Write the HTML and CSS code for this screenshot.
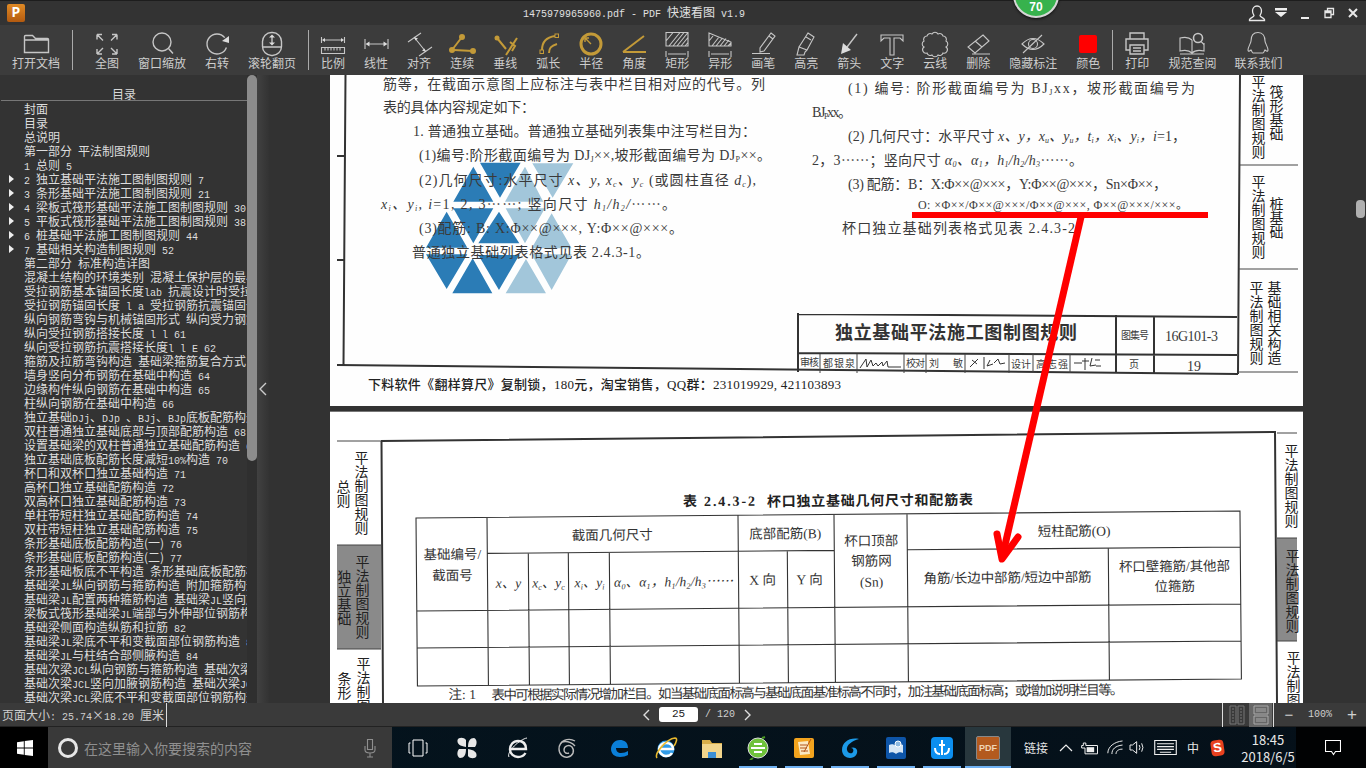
FILE: index.html
```html
<!DOCTYPE html>
<html lang="zh-CN">
<head>
<meta charset="utf-8">
<title>PDF 快速看图</title>
<link rel="stylesheet" href="styles.css">
</head>
<body>
<div class="app">
  <header class="titlebar">
    <div class="logo">P</div>
    <div class="title"><span class="m">1475979965960.pdf - PDF </span>快速看图<span class="m"> v1.9</span></div>
    <div class="winctl">
      <svg class="wc" viewBox="0 0 20 20"><path d="M10 3c-3 0-4.500 2.500-4.500 5 0 2 1 3.500 1.500 4.500 0 1.500-3.500 2-4.500 4v1h15v-1c-1-2-4.500-2.500-4.500-4 .5-1 1.500-2.500 1.500-4.500 0-2.500-1.500-5-4.500-5z"/></svg>
      <svg class="wc wc-fill" viewBox="0 0 20 20"><path d="M4 5h12v2.500H4zM4 9h12l-6 5z"/></svg>
      <svg class="wc wc-fill" viewBox="0 0 20 20"><path d="M6 14h8v2H6z"/></svg>
      <svg class="wc" viewBox="0 0 20 20"><path d="M8.500 8V5.500h6v6H12M6 8h6v6.500H6zM6 9.500h6"/></svg>
      <svg class="wc wc-bold" viewBox="0 0 20 20"><path d="M6 6l8 8M14 6l-8 8"/></svg>
    </div>
  </header>

  <nav class="toolbar">
    <button class="tool tool-first"><svg class="ico" viewBox="-8 0 40 28"><path d="M.5 24.500V8.500q0-1 1-1h7l3 3h12q1 0 1 1v13zM.5 12h24"/></svg><span>打开文档</span></button>
    <i class="sep"></i>
    <button class="tool tool-view1"><svg class="ico" viewBox="-8 0 40 28"><path d="M2 6.500h5M2 6.500v5M2 6.500l6 6M22 6.500h-5M22 6.500v5M22 6.500l-6 6M2 26h5M2 26v-5M2 26l6-6M22 26h-5M22 26v-5M22 26l-6-6"/></svg><span>全图</span></button>
    <button class="tool"><svg class="ico" viewBox="-8 0 40 28"><circle cx="12" cy="14" r="9"/><path d="M18.500 20.500L23 25.500"/></svg><span>窗口缩放</span></button>
    <button class="tool"><svg class="ico" viewBox="-8 0 40 28"><path d="M19.700 9.600A10 10 0 1 0 21.400 19.400"/><path class="solid" d="M24 8v7l-7-2z"/></svg><span>右转</span></button>
    <button class="tool"><svg class="ico" viewBox="-8 0 40 28"><rect x="2.500" y="4.500" width="19" height="23" rx="9"/><path d="M2.500 19h19M12 9v6"/><path class="solid" d="M12 6.500l3 3H9zM12 17.500l3-3H9z"/></svg><span>滚轮翻页</span></button>
    <i class="sep sep-b"></i>
    <button class="tool tool-m"><svg class="ico thin" viewBox="-8 0 40 28"><path d="M.5 9v6M23.500 9v6M3 12h18"/><path class="solid" d="M1 12l3-2v4zM23 12l-3-2v4z"/><path d="M.5 19.500h23v6H.5zM4 19.500v3M7 19.500v3M10 19.500v3M13 19.500v3M16 19.500v3M19 19.500v3"/></svg><span>比例</span></button>
    <button class="tool tool-m"><svg class="ico thin" viewBox="-8 0 40 28"><path d="M1 11v10M24 11v10M3 16h19"/><path class="solid" d="M1.500 16l4-2.500v5zM23.500 16l-4-2.500v5z"/></svg><span>线性</span></button>
    <button class="tool tool-m"><svg class="ico thin" viewBox="-8 0 40 28"><path d="M1 14L14 5M12 28l13-9M7 9l12 15"/><path class="solid" d="M7 9l4 1.500-2.500 2zM19 24l-4-1.500 2.500-2z"/></svg><span>对齐</span></button>
    <button class="tool tool-m"><svg class="ico au" viewBox="-8 0 40 28"><path d="M12 9L2 22M4 22l19 1"/><circle class="dot" cx="12" cy="9" r="3"/><circle class="dot" cx="2" cy="22" r="3"/><circle class="dot" cx="23" cy="23" r="3"/></svg><span>连续</span></button>
    <button class="tool tool-m"><svg class="ico au" viewBox="-8 0 40 28"><path d="M4 10l9 11M24 10L13 27M17 14l5 4-3 5"/><circle class="dot" cx="4" cy="10" r="2.500"/></svg><span>垂线</span></button>
    <button class="tool tool-m"><svg class="ico au" viewBox="-8 0 40 28"><path d="M6 22C6 13 12 9 19 8M13 25c0-5 2-7 8-9"/><rect class="box" x="4" y="22" width="3.500" height="3.500"/><rect class="box" x="19" y="6" width="3.500" height="3.500"/></svg><span>弧长</span></button>
    <button class="tool tool-m"><svg class="ico au heavy" viewBox="-8 0 40 28"><circle cx="12" cy="16" r="10"/><path class="fine" d="M12 16L6 10M6 10v4M6 10h4"/></svg><span>半径</span></button>
    <button class="tool tool-m"><svg class="ico au" viewBox="-8 0 40 28"><path d="M1 24h23M1 24L22 8"/></svg><span>角度</span></button>
    <button class="tool tool-m"><svg class="ico thin" viewBox="-8 0 40 28"><path d="M1 4.500h22v13.500H1zM4 18L15 4.500M8 18L19 4.500M12 18L23 4.500M16 18l7-8.500M1 13L8 4.500M20 18l3-3.500M1 23v6M23 23v6M3 26h18"/></svg><span>矩形</span></button>
    <button class="tool tool-m"><svg class="ico thin" viewBox="-8 0 40 28"><path d="M1 5l22 9v4H1zM4 18L11 9M8 18l6.500-8M12 18l6-7.500M16 18l5-6M1 13l4-5M20 18l3-3M1 23v6M23 23v6M3 26h18"/></svg><span>异形</span></button>
    <button class="tool tool-m"><svg class="ico thin" viewBox="-8 0 40 28"><path d="M20 5l4 3-11 15-4 1v-4zM18 8l4 3M1 25.500h18"/></svg><span>画笔</span></button>
    <button class="tool tool-m"><svg class="ico thin" viewBox="-8 0 40 28"><path d="M14 5l6 4-7 13-8-3zM5 19l-1 4-1 4h7l1-3 2-2M12 9l5 3"/></svg><span>高亮</span></button>
    <button class="tool tool-m"><svg class="ico" viewBox="-8 0 40 28"><path d="M20 6L7 23"/><path class="solid" d="M4 26l2-11 8 7z"/></svg><span>箭头</span></button>
    <button class="tool tool-m"><svg class="ico thin" viewBox="-8 0 40 28"><path d="M1 7h22v6l-3-3h-6v17h-4V10H4l-3 3z"/></svg><span>文字</span></button>
    <button class="tool tool-m"><svg class="ico thin" viewBox="-8 0 40 28"><path d="M4 8A3.400 3.400 0 0 1 9 6 3.400 3.400 0 0 1 15 6 3.400 3.400 0 0 1 20 8 3.400 3.400 0 0 1 23 13 3.400 3.400 0 0 1 23 19 3.400 3.400 0 0 1 20 25 3.400 3.400 0 0 1 15 27 3.400 3.400 0 0 1 9 27 3.400 3.400 0 0 1 4 25 3.400 3.400 0 0 1 1 19 3.400 3.400 0 0 1 1 13 3.400 3.400 0 0 1 4 8z"/></svg><span>云线</span></button>
    <button class="tool tool-m"><svg class="ico thin" viewBox="-8 0 40 28"><path d="M17 7l6 6-14 12-7-6zM9 13l7 6M6 26h18"/></svg><span>删除</span></button>
    <button class="tool tool-m"><svg class="ico thin" viewBox="-8 0 40 28"><path d="M1 16Q12 5 23 16 12 27 1 16z"/><circle cx="12" cy="16" r="4.500"/><path d="M21 7L2 25"/></svg><span>隐藏标注</span></button>
    <button class="tool tool-m"><svg class="ico" viewBox="-8 0 40 28"><rect class="red" x="3" y="7" width="18" height="18" rx="2"/></svg><span>颜色</span></button>
    <i class="sep sep-b"></i>
    <button class="tool tool-m"><svg class="ico" viewBox="-8 0 40 28"><path d="M5 11V5h14v6M5 22H1V11h22v11h-4M5 17h14v9H5zM8 20h8M8 23h8"/></svg><span>打印</span></button>
    <button class="tool tool-m"><svg class="ico thin" viewBox="-8 0 40 28"><path d="M12 12C9 9 4 9 0 10v13c4-1 9-1 12 2 3-3 8-3 12-2V15M12 12v13M0 26h24"/><circle class="lens" cx="18" cy="10" r="4.500"/><path d="M21 13.500l3 3"/></svg><span>规范查阅</span></button>
    <button class="tool tool-q"><svg class="ico thin" viewBox="-8 0 40 28"><path d="M12 4.500c-5 0-7 4-7 8.500 0 2-3 6-3 9 0 2 2 1 3 0 1 1 1 3 2 3h10c1 0 1-2 2-3 1 1 3 2 3 0 0-3-3-7-3-9 0-4.500-2-8.500-7-8.500z"/></svg><span>联系我们</span></button>
  </nav>
  <div class="badge"><span>70</span></div>

  <main class="main">
    <aside class="side">
      <div class="side-head">目录</div>
      <ul class="toc">
        <li>封面</li>
        <li>目录</li>
        <li>总说明</li>
        <li>第一部分 平法制图规则</li>
        <li><span class="m">1</span> 总则 <span class="m">5</span></li>
        <li class="more"><span class="m">2</span> 独立基础平法施工图制图规则 <span class="m">7</span></li>
        <li class="more"><span class="m">3</span> 条形基础平法施工图制图规则 <span class="m">21</span></li>
        <li class="more"><span class="m">4</span> 梁板式筏形基础平法施工图制图规则 <span class="m">30</span></li>
        <li class="more"><span class="m">5</span> 平板式筏形基础平法施工图制图规则 <span class="m">38</span></li>
        <li class="more"><span class="m">6</span> 桩基础平法施工图制图规则 <span class="m">44</span></li>
        <li class="more"><span class="m">7</span> 基础相关构造制图规则 <span class="m">52</span></li>
        <li>第二部分 标准构造详图</li>
        <li>混凝土结构的环境类别 混凝土保护层的最小厚度</li>
        <li>受拉钢筋基本锚固长度<span class="m">lab</span> 抗震设计时受拉钢筋</li>
        <li>受拉钢筋锚固长度<span class="m"> l a</span> 受拉钢筋抗震锚固长度</li>
        <li>纵向钢筋弯钩与机械锚固形式 纵向受力钢筋</li>
        <li>纵向受拉钢筋搭接长度<span class="m"> l l</span>  <span class="m">61</span></li>
        <li>纵向受拉钢筋抗震搭接长度<span class="m">l l E</span> <span class="m">62</span></li>
        <li>箍筋及拉筋弯钩构造 基础梁箍筋复合方式 <span class="m">63</span></li>
        <li>墙身竖向分布钢筋在基础中构造 <span class="m">64</span></li>
        <li>边缘构件纵向钢筋在基础中构造 <span class="m">65</span></li>
        <li>柱纵向钢筋在基础中构造 <span class="m">66</span></li>
        <li>独立基础<span class="m">DJj</span>、<span class="m">DJp</span> 、<span class="m">BJj</span>、<span class="m">BJp</span>底板配筋构造</li>
        <li>双柱普通独立基础底部与顶部配筋构造 <span class="m">68</span></li>
        <li>设置基础梁的双柱普通独立基础配筋构造 <span class="m">69</span></li>
        <li>独立基础底板配筋长度减短<span class="m">10%</span>构造 <span class="m">70</span></li>
        <li>杯口和双杯口独立基础构造 <span class="m">71</span></li>
        <li>高杯口独立基础配筋构造 <span class="m">72</span></li>
        <li>双高杯口独立基础配筋构造 <span class="m">73</span></li>
        <li>单柱带短柱独立基础配筋构造 <span class="m">74</span></li>
        <li>双柱带短柱独立基础配筋构造 <span class="m">75</span></li>
        <li>条形基础底板配筋构造(一) <span class="m">76</span></li>
        <li>条形基础底板配筋构造(二) <span class="m">77</span></li>
        <li>条形基础板底不平构造 条形基础底板配筋构造</li>
        <li>基础梁<span class="m">JL</span>纵向钢筋与箍筋构造 附加箍筋构造</li>
        <li>基础梁<span class="m">JL</span>配置两种箍筋构造 基础梁<span class="m">JL</span>竖向加腋</li>
        <li>梁板式筏形基础梁<span class="m">JL</span>端部与外伸部位钢筋构造</li>
        <li>基础梁侧面构造纵筋和拉筋 <span class="m">82</span></li>
        <li>基础梁<span class="m">JL</span>梁底不平和变截面部位钢筋构造 <span class="m">83</span></li>
        <li>基础梁<span class="m">JL</span>与柱结合部侧腋构造 <span class="m">84</span></li>
        <li>基础次梁<span class="m">JCL</span>纵向钢筋与箍筋构造 基础次梁</li>
        <li>基础次梁<span class="m">JCL</span>竖向加腋钢筋构造 基础次梁<span class="m">JCL</span></li>
        <li>基础次梁<span class="m">JCL</span>梁底不平和变截面部位钢筋构造</li>
      </ul>
    </aside>
    <div class="side-bar"><i class="side-thumb"></i></div>
    <div class="collapse"><svg class="chev" viewBox="0 0 8 14"><path d="M7 1L1 7l6 6"/></svg></div>

    <section class="viewer">
      <div class="page page-one">
        <svg class="scan" viewBox="330 75 973 331">
          <g transform="translate(330 75) scale(.3333)">
            <path class="tri-d" d="M450 263h122l-62 105zM370 380h120l-60-105zM370 400h120l-60 105zM445 505h123l-61-95zM288 518h124l-62-108zM288 538h124l-62 104zM367 655h120l-59-105zM445 540h123l-61 105z"/>
            <path class="tri-l" d="M525 380h115l-55-105zM607 265h123l-62 103zM527 400h118l-60 105zM605 520h120l-60-105zM605 538h120l-60 107zM527 655h121l-60-103z"/>
          </g>
          <path class="fr" d="M345.500 75L343.500 366M337 365l901 9M1240 75l-2 299M337 156h8M337 260h7"/>
          <text class="d" x="383" y="84" textLength="382">筋等，在截面示意图上应标注与表中栏目相对应的代号。列</text>
          <text class="d" x="383" y="107" textLength="152">表的具体内容规定如下：</text>
          <text class="d" x="413" y="131" textLength="343">1. 普通独立基础。普通独立基础列表集中注写栏目为：</text>
          <text class="d" x="419" y="155" textLength="352">(1)编号:阶形截面编号为 DJ<tspan class="s">J</tspan>××,坡形截面编号为 DJ<tspan class="s">P</tspan>××。</text>
          <text class="d" x="419" y="180" textLength="337">(2)几何尺寸:水平尺寸 <tspan class="i">x、y, x<tspan class="s">c</tspan>、y<tspan class="s">c</tspan></tspan> (或圆柱直径 <tspan class="i">d<tspan class="s">c</tspan></tspan>),</text>
          <text class="d" x="381" y="204" textLength="295"><tspan class="i">x<tspan class="s">i</tspan>、y<tspan class="s">i</tspan>, i</tspan>=1, 2, 3⋯⋯; 竖向尺寸 <tspan class="i">h<tspan class="s">1</tspan>/h<tspan class="s">2</tspan>/</tspan>⋯⋯。</text>
          <text class="d" x="419" y="228" textLength="264">(3)配筋: B: X:Φ××@×××, Y:Φ××@×××。</text>
          <text class="d" x="412" y="252" textLength="238">普通独立基础列表格式见表 2.4.3-1。</text>

          <text class="d" x="848" y="88" textLength="347">(1) 编号:  阶形截面编号为 BJ<tspan class="s">J</tspan>xx，坡形截面编号为</text>
          <text class="d" x="812" y="112" textLength="40">BJ<tspan class="s">P</tspan>xx。</text>
          <text class="d" x="848" y="136" textLength="338">(2) 几何尺寸：水平尺寸 <tspan class="i">x、y，x<tspan class="s">u</tspan>、y<tspan class="s">u</tspan>，t<tspan class="s">i</tspan>，x<tspan class="s">i</tspan>、y<tspan class="s">i</tspan>，i</tspan>=1，</text>
          <text class="d" x="812" y="160" textLength="271">2，3⋯⋯；竖向尺寸 <tspan class="i">α<tspan class="s">0</tspan>、α<tspan class="s">1</tspan>，h<tspan class="s">1</tspan>/h<tspan class="s">2</tspan>/h<tspan class="s">3</tspan></tspan>⋯⋯。</text>
          <text class="d" x="848" y="184" textLength="319">(3) 配筋：B：X:Φ××@×××，Y:Φ××@×××，Sn×Φ××，</text>
          <text class="d d-sm" x="918" y="205" textLength="270">O: ×Φ××/Φ××@×××/Φ××@×××, Φ××@×××/×××。</text>
          <text class="d" x="842" y="228" textLength="233">杯口独立基础列表格式见表 2.4.3-2</text>
          <text class="d d-foot" x="368" y="384" textLength="473">下料软件《翻样算尺》复制锁，180元，淘宝销售，QQ群：231019929, 421103893</text>

          <path class="fr" d="M798 314l439 3M798 313v59M798 353l439 2M1116 315v57M1154 316v57"/>
          <path class="hair" d="M820 354v19M857 354v19M904 354v19M926 354v19M965 354v19M1009 354v19M1033 354v19M1070 354v19"/>
          <path class="hair" d="M1240 165h58M1239 269h59M1238 372h60"/>
          <text class="d d-title" x="835" y="333" textLength="242">独立基础平法施工图制图规则</text>
          <text class="d d-xs" x="1121" y="335" textLength="28">图集号</text>
          <text class="d" x="1165" y="336" textLength="53">16G101-3</text>
          <text class="d d-xs" x="800" y="362" textLength="19">审核</text>
          <text class="d d-xs" x="823" y="363" textLength="32">都银泉</text>
          <path class="sig" d="M860 368l6-9 1 8 4-7 2 6 3-3 2 3 4-4 1 4 4-5 1 6h13"/>
          <text class="d d-xs" x="906" y="363" textLength="19">校对</text>
          <text class="d d-xs" x="929" y="363" textLength="34">刘  敏</text>
          <path class="sig" d="M970 367l8-8M972 360l5 4M984 357v12M990 360l-3 6 6-2M994 363l4-4 2 5 5-1"/>
          <text class="d d-xs" x="1011" y="364" textLength="20">设计</text>
          <text class="d d-xs" x="1036" y="364" textLength="32">高志强</text>
          <path class="sig" d="M1074 363h8M1085 358v12M1082 361h7M1092 358l-2 8 6-1M1095 360h5M1096 366h5"/>
          <text class="d d-xs" x="1129" y="364">页</text>
          <text class="d" x="1187" y="366">19</text>

          <text class="d v" x="1257" y="75">平法制图规则</text>
          <text class="d v" x="1275" y="85">筏形基础</text>
          <text class="d v" x="1257" y="175">平法制图规则</text>
          <text class="d v" x="1275" y="197">桩基础</text>
          <text class="d v" x="1255" y="281">平法制图规则</text>
          <text class="d v" x="1273" y="281">基础相关构造</text>
        </svg>
      </div>

      <div class="page page-two">
        <svg class="scan" viewBox="330 411 973 292">
          <rect class="tab" x="337" y="545" width="44" height="104"/>
          <rect class="tab" x="1277" y="538" width="20" height="103"/>
          <path class="fr" d="M381 441l895-9M381.500 441L383 703M1275 432l2 271"/>
          <path class="hair" d="M337 441h44M337 545h44M337 649h44M1277 433h20M1277 538h20M1277 641h20"/>
          <text class="d v" x="342" y="480">总则</text>
          <text class="d v" x="360" y="451">平法制图规则</text>
          <text class="d v" x="343" y="570">独立基础</text>
          <text class="d v" x="361" y="555">平法制图规则</text>
          <text class="d v" x="343" y="672">条形</text>
          <text class="d v" x="362" y="657">平法制图规则</text>
          <text class="d v" x="1290" y="444">平法制图规则</text>
          <text class="d v" x="1291" y="549">平法制图规则</text>
          <text class="d v" x="1292" y="651">平法制图规则</text>
          <g transform="rotate(-.49 416 518)">
            <path class="tb" d="M416 518h824v168H416zM487 518v168M738 518v168M834 518v168M907 518v168M487 554h347M907 554h333M416 611h824M416 648h824M528 554v132M568 554v132M609 554v132M787 554v132M1108 554v132"/>
            <text class="d t-b" x="683" y="504" textLength="72">表 2.4.3-2</text>
            <text class="d t-b" x="767" y="505" textLength="206">杯口独立基础几何尺寸和配筋表</text>
            <text class="d t mid" x="452" y="555">基础编号/</text>
            <text class="d t mid" x="452" y="576">截面号</text>
            <text class="d t mid" x="612" y="537">截面几何尺寸</text>
            <text class="d t i mid" x="508" y="584">x、y</text>
            <text class="d t i mid" x="548" y="584">x<tspan class="s">c</tspan>、y<tspan class="s">c</tspan></text>
            <text class="d t i mid" x="589" y="584">x<tspan class="s">i</tspan>、y<tspan class="s">i</tspan></text>
            <text class="d t i mid" x="673" y="584" textLength="119">α<tspan class="s">0</tspan>、α<tspan class="s">1</tspan>，h<tspan class="s">1</tspan>/h<tspan class="s">2</tspan>/h<tspan class="s">3</tspan>⋯⋯</text>
            <text class="d t mid" x="785" y="537">底部配筋(B)</text>
            <text class="d t mid" x="762" y="583">X 向</text>
            <text class="d t mid" x="809" y="583">Y 向</text>
            <text class="d t mid" x="871" y="545">杯口顶部</text>
            <text class="d t mid" x="871" y="565">钢筋网</text>
            <text class="d t mid" x="871" y="586">(Sn)</text>
            <text class="d t mid" x="1074" y="537">短柱配筋(O)</text>
            <text class="d t mid" x="1007" y="583" textLength="168">角筋/长边中部筋/短边中部筋</text>
            <text class="d t mid" x="1174" y="573" textLength="111">杯口壁箍筋/其他部</text>
            <text class="d t mid" x="1174" y="593">位箍筋</text>
            <text class="d t" x="447" y="695">注: 1</text>
            <text class="d t" x="490" y="696" textLength="632">表中可根据实际情况增加栏目。如当基础底面标高与基础底面基准标高不同时，加注基础底面标高；或增加说明栏目等。</text>
          </g>
        </svg>
      </div>

      <svg class="mark" viewBox="269 75 1097 628">
        <path class="mark-bar" d="M912 215h296"/>
        <path class="mark-line" d="M1081 217L1002 558"/>
        <path class="mark-head" d="M997 534L1002 559 1018 537"/>
      </svg>
      <i class="vthumb"></i>
    </section>
  </main>

  <footer class="status">
    <div class="st-left">页面大小<span class="m">: 25.74</span><span class="times">×</span><span class="m">18.20</span> 厘米</div>
    <div class="nav">
      <svg class="navchev" viewBox="0 0 8 12"><path d="M6 1L1 6l5 5"/></svg>
      <span class="pageno">25</span>
      <span class="m pagect">/ 120</span>
      <svg class="navchev navchev-r" viewBox="0 0 8 12"><path d="M2 1l5 5-5 5"/></svg>
    </div>
    <div class="views">
      <svg class="vicon" viewBox="0 0 16 20"><path d="M1 1h6v18H1zM9 1h6v18H9zM3 4h2M3 7h2M3 10h2M3 13h2M3 16h2M11 4h2M11 7h2M11 10h2M11 13h2M11 16h2"/></svg>
      <span class="vactive"><svg class="vicon2" viewBox="0 0 16 20"><path d="M1 1h14v8H1zM1 11h14v8H1zM3 4h10M3 6h10M3 14h10M3 16h10"/></svg></span>
    </div>
    <div class="zoombox">
      <span class="zbtn">−</span>
      <span class="m zval">100%</span>
      <span class="zbtn zbtn-p">+</span>
    </div>
  </footer>

  <div class="taskbar">
    <div class="start"><svg class="win" viewBox="0 0 16 16"><path d="M0 2.200l6.800-1v6.400H0zM7.700 1.100L16 0v7.600H7.700zM0 8.500h6.800v6.300L0 13.800zM7.700 8.500H16V16l-8.300-1.100z"/></svg></div>
    <div class="search">
      <i class="cortana"></i>
      <span class="ph">在这里输入你要搜索的内容</span>
      <svg class="mic" viewBox="0 0 12 20"><path d="M3.500 1.500h5v10h-5zM1 8v4q0 3 5 3t5-3V8M6 15v4M3 19h6"/></svg>
    </div>
    <div class="slot s-task"><svg class="tv" viewBox="0 0 20 18"><path d="M5 1h10v16H5zM2.500 4H1v10h1.500M17.500 4H19v10h-1.500"/></svg></div>
    <div class="slot s-pin"><svg class="ti" viewBox="0 0 24 24"><path class="w" d="M11 11C5 10 2 8 2.500 4 3.500 1 9 1 11 4zM13 11c0-6 2-9 6-9 3 1 3.500 6 1 9zM13 13c6 1 9 3 8.500 7-1 3-6.500 3-8.500 0zM11 13c0 6-2 9-6 9-3-1-3.500-6-1-9z"/></svg></div>
    <div class="slot s-ie"><svg class="ti" viewBox="0 0 24 24"><path class="ws" d="M5 13h15C20 7 16 5 12 5 7 5 4 9 4 13.500S8 21 12 21c3 0 6-1.500 7.500-4"/><path class="ws2" d="M3 21C0 16 14 3 21 2"/></svg></div>
    <div class="slot s-swirl"><svg class="ti" viewBox="0 0 24 24"><path class="gs" d="M20 5C13 1 4 5 4 13c0 6 5 9 9 8 5-1 7-6 4-10-3-3-8-1-8 3 0 3 3 4 5 3M7 6c4-1 9 0 13 4"/></svg></div>
    <div class="slot s-edge"><svg class="ti" viewBox="0 0 24 24"><path class="edge" d="M5 12h15C20 6 16 4 12 4 6 4 3 9 3 13c0 5 4 8 9 8 3 0 6-1 8-2v-4c-2 1-4 2-7 2-3 0-5-2-5-5z"/></svg></div>
    <div class="slot"><svg class="ti" viewBox="0 0 24 24"><circle class="ie-r" cx="12" cy="13" r="8.500"/><path class="ie-e" d="M6 13h13c0-4-3-6-7-6s-7 3-7 6 3 7 7 7c3 0 5-1 6-3"/><path class="ie-o" d="M3 22C0 18 12 3 21 2c3 0 1 5-1 8"/></svg></div>
    <div class="slot"><svg class="ti" viewBox="0 0 24 24"><path class="fo-b" d="M2 4h8l2 3h10v15H2z"/><path class="fo-f" d="M2 8h20v14H2z"/><path class="fo-i" d="M8 22v-6h8v6z"/></svg></div>
    <div class="slot on"><svg class="ti" viewBox="0 0 24 24"><circle class="gr" cx="12" cy="12" r="10"/><path class="grw" d="M5 12h14M8 8h8M8 16h8"/><path class="grl" d="M16 2l3-1M7 22l-3 2"/></svg></div>
    <div class="slot on"><svg class="ti" viewBox="0 0 24 24"><rect class="nb" x="2" y="2" width="20" height="20" rx="2"/><path class="nbp" d="M6 6l10-1 2 13-10 1z"/><path class="nbl" d="M8 9h7M8 12h7M9 15h7M19 3l-7 13"/></svg></div>
    <div class="slot on"><svg class="ti" viewBox="0 0 24 24"><path class="gb" d="M21 3C12 1 4 6 4 14c0 5 4 8 8 8 5 0 8-4 7-8-1-3-5-3-6-2 2 0 3 2 2 4s-5 2-6-2C8 9 14 5 21 3z"/></svg></div>
    <div class="slot on"><svg class="ti" viewBox="0 0 24 24"><rect class="bk" x="2" y="1" width="20" height="22" rx="2"/><path class="bkw" d="M5 17c2-1 5-1 7 1 2-2 5-2 7-1V9c-2-1-5-1-7 1-2-2-5-2-7-1z"/><circle class="bkc" cx="14" cy="8" r="3"/></svg></div>
    <div class="slot on"><svg class="ti" viewBox="0 0 24 24"><rect class="ba" x="1" y="1" width="22" height="22" rx="4"/><path class="baw" d="M12 4v15M5 12c0 5 3 6 5 6M19 12c0 5-3 6-5 6M9 9h6"/></svg></div>
    <div class="slot on active"><span class="pdf"><span>PDF</span></span></div>
    <div class="tray">
      <span class="t-link">链接</span>
      <svg class="tr tr-up" viewBox="0 0 14 14"><path d="M1 10l6-6 6 6"/></svg>
      <svg class="tr tr-bat" viewBox="0 0 24 16"><path d="M2 5h2v-3h3v3h14v10H6V8H2z"/><path class="trf" d="M8 7h9v6H8z"/></svg>
      <svg class="tr tr-wifi" viewBox="0 0 22 18"><path d="M1 16c0-8 8-14 18-15M6 17c0-6 4-10 13-11M11 17c0-3 2-6 8-6"/></svg>
      <svg class="tr tr-vol" viewBox="0 0 20 18"><path d="M1 6h3l5-4v14l-5-4H1zM12 6q2 3 0 6M15 4q3 5 0 10"/></svg>
      <svg class="tr tr-kb" viewBox="0 0 24 16"><path d="M.5.5h23v15H.5zM3 4h18M3 7h18M3 10h18M6 13h12"/></svg>
      <span class="t-zh">中</span>
      <span class="sogou"><span>S</span></span>
      <div class="clock"><span>18:45</span><span>2018/6/5</span></div>
    </div>
    <div class="notify"><svg class="nt" viewBox="0 0 16 16"><path d="M.5.5h15v11h-5l-2 3-2-3h-6z"/></svg></div>
  </div>
</div>
</body>
</html>
```

FILE: styles.css
```css
* { box-sizing: border-box; }
html, body { margin: 0; padding: 0; background: #333; }
body { font-family: "Noto Sans CJK SC", sans-serif; font-size: 12px; color: #d8d8d8; }
.app { position: relative; width: 1366px; height: 768px; display: flex; flex-direction: column; overflow: hidden; }
.m { font-family: "Liberation Mono", monospace; font-size: 10px; word-spacing: 0; }

/* title bar */
.titlebar { height: 25px; display: flex; align-items: center; background: #333; border-top: 1px solid #1d1d1d; flex: none; }
.logo { width: 18px; height: 18px; margin-left: 7px; border-radius: 2px; background: linear-gradient(#e08a25, #b35a10); color: #fff; font: bold 14px/18px "Liberation Mono", monospace; text-align: center; }
.title { margin-left: 498px; font-size: 12px; line-height: 14px; color: #e0e0e0; white-space: nowrap; }
.winctl { margin-left: auto; display: flex; align-items: center; width: 122px; padding-left: 3px; gap: 4px; }
.wc { width: 20px; height: 20px; fill: none; stroke: #e8e8e8; stroke-width: 1.3; }
.wc-fill { fill: #eee; stroke: none; }
.wc-bold { stroke-width: 2; }

/* toolbar */
.toolbar { height: 50px; flex: none; display: flex; align-items: flex-start; background: #3c3c3c; padding-top: 3px; }
.tool { display: flex; flex-direction: column; align-items: center; background: none; border: 0; padding: 0; margin-left: 19px; color: #cdcdcd; font: 12px/14px "Noto Sans CJK SC", sans-serif; white-space: nowrap; }
.tool-first { margin-left: 12px; }
.tool-view1 { margin-left: 22px; }
.tool-q { margin-left: 18px; }
.ico { width: 40px; height: 28px; margin: 0 -8px; overflow: visible; fill: none; stroke: #c6c6c6; stroke-width: 1.4; }
.ico.thin { stroke-width: 1.1; }
.ico .solid { fill: #dcdcdc; stroke: none; }
.ico.au { stroke: #c39a38; stroke-width: 2; }
.ico.au.heavy { stroke-width: 3; }
.ico .dot { fill: #c39a38; stroke: none; }
.ico .box { stroke-width: 1; fill: #3c3c3c; }
.ico .fine { stroke-width: 1.4; }
.ico .red { fill: #f00; stroke: none; }
.ico .lens { fill: #3c3c3c; stroke-width: 1.6; }
.sep { flex: none; width: 1px; height: 40px; margin: 2px 0 0 12px; background: #aaa; }
.sep + .tool { margin-left: 22px; }
.sep-b + .tool { margin-left: 12px; }

/* badge */
.badge { position: absolute; left: 1013px; top: -28px; width: 46px; height: 46px; border-radius: 50%; background: #37b24d; border: 2px solid #d6d6d6; box-shadow: 0 1px 3px rgba(0, 0, 0, .7); display: flex; align-items: flex-end; justify-content: center; z-index: 3; }
.badge span { color: #fff; font: bold 12px/15px "Liberation Sans", sans-serif; margin-bottom: 1px; }

/* main */
.main { flex: 1; min-height: 0; display: flex; background: #333; }
.side { width: 247px; flex: none; overflow: hidden; background: #333; }
.side-head { height: 26px; margin-left: 1px; border-bottom: 1px solid #777; text-align: center; font-size: 12px; line-height: 38px; color: #d8d8d8; }
.toc { list-style: none; margin: 1px 0 0; padding: 0; }
.toc li { position: relative; height: 14px; padding-left: 24px; line-height: 14px; white-space: nowrap; word-spacing: 3.3px; color: #dedede; }
.toc li.more::before { content: ""; position: absolute; left: 9px; top: 3px; border-left: 5px solid #eee; border-top: 4px solid transparent; border-bottom: 4px solid transparent; }
.side-bar { width: 10px; flex: none; background: #2f2f2f; }
.side-thumb { display: block; width: 10px; height: 386px; background: #8c8c8c; border-radius: 5px; }
.collapse { width: 12px; flex: none; display: flex; align-items: center; background: linear-gradient(90deg, #414141, #333); padding: 0 0 1px 2px; }
.chev { width: 8px; height: 14px; fill: none; stroke: #ccc; stroke-width: 1.4; }

/* viewer */
.viewer { position: relative; flex: 1; min-width: 0; padding-left: 61px; overflow: hidden; background: #323232; }
.page { width: 973px; background: #fff; overflow: hidden; }
.page-one { height: 331px; margin-bottom: 5px; background: #fefefe; }
.page-two { height: 292px; border-top: 1px solid #777; }
.scan { display: block; width: 973px; height: 100%; }
.page-one .scan { height: 331px; }
.page-two .scan { height: 292px; margin-top: -1px; }
.d { font-family: "Liberation Serif", "Noto Sans CJK SC", serif; font-size: 14px; fill: #3a3a3a; dominant-baseline: central; }
.d-sm { font-size: 12px; }
.d-xs { font-size: 10px; }
.d-foot { font-size: 13px; fill: #222; font-weight: 500; }
.d-title { font-size: 18px; font-weight: 700; fill: #333; }
.i { font-style: italic; }
.s { font-size: 8px; baseline-shift: sub; }
.v { writing-mode: vertical-rl; dominant-baseline: auto; font-size: 14px; fill: #222; }
.t { font-size: 13.5px; fill: #333; }
.t-b { font-size: 14px; font-weight: 700; fill: #222; }
.mid { text-anchor: middle; }
.fr { fill: none; stroke: #333; stroke-width: 2; }
.hair { fill: none; stroke: #444; stroke-width: 1; }
.sig { fill: none; stroke: #333; stroke-width: 1; }
.tab { fill: #8a8a8a; }
.tb { fill: none; stroke: #333; stroke-width: 1.1; }
.tri-d { fill: #2b7cb6; }
.tri-l { fill: #a2c6da; }
.mark { position: absolute; left: 0; top: 0; width: 1097px; height: 628px; pointer-events: none; }
.mark-bar { stroke: #f00; stroke-width: 6; fill: none; }
.mark-line { stroke: #f00; stroke-width: 7; fill: none; }
.mark-head { stroke: #f00; stroke-width: 7; fill: none; stroke-linecap: round; stroke-linejoin: round; }
.vthumb { position: absolute; left: 1087px; top: 125px; width: 9px; height: 18px; border-radius: 4px; background: #b0b0b0; }

/* status */
.status { height: 24px; flex: none; display: flex; align-items: center; background: #3a3a3a; border-bottom: 1px solid #222; }
.st-left { width: 167px; height: 24px; padding-left: 2px; line-height: 23px; border-right: 1px solid #ddd; color: #cfcfcf; white-space: nowrap; word-spacing: 3.3px; }
.times { display: inline-block; width: 12px; text-align: center; }
.nav { display: flex; align-items: center; margin-left: 476px; }
.navchev { width: 8px; height: 12px; fill: none; stroke: #ddd; stroke-width: 1.4; }
.navchev-r { margin-left: 8px; }
.pageno { width: 39px; height: 15px; margin-left: 8px; background: #fff; border-radius: 3px; color: #222; font: 11px/15px "Liberation Mono", monospace; text-align: center; }
.pagect { margin-left: 7px; color: #cfcfcf; }
.views { margin-left: auto; width: 52px; height: 24px; display: flex; align-items: center; border-left: 1px solid #ddd; border-right: 1px solid #ddd; padding-left: 6px; }
.vicon { width: 16px; height: 20px; fill: none; stroke: #777; stroke-width: 1; }
.vactive { display: flex; justify-content: center; align-items: center; width: 23px; height: 24px; margin-left: 4px; background: #666; }
.vicon2 { width: 16px; height: 20px; fill: none; stroke: #aaa; stroke-width: 1; }
.zoombox { width: 92px; display: flex; align-items: center; padding-left: 10px; color: #cfcfcf; }
.zbtn { width: 10px; font: 15px/20px "Liberation Sans", sans-serif; text-align: center; }
.zbtn-p { margin-left: 15px; font-size: 17px; }
.zval { margin-left: 14px; width: 24px; }

/* taskbar */
.taskbar { height: 41px; flex: none; display: flex; align-items: stretch; background: linear-gradient(90deg, #04141e, #051019); }
.start { width: 48px; background: #000; display: flex; align-items: center; justify-content: center; }
.win { width: 16px; height: 16px; fill: #fff; margin-left: 1px; }
.search { width: 344px; background: #393939; display: flex; align-items: center; }
.cortana { width: 20px; height: 20px; margin-left: 10px; border: 3px solid #e6e6e6; border-radius: 50%; }
.ph { margin-left: 6px; font-size: 14px; color: #8f8f8f; white-space: nowrap; }
.mic { width: 12px; height: 20px; margin-left: 112px; fill: none; stroke: #8f8f8f; stroke-width: 1.1; }
.slot { position: relative; width: 46px; display: flex; align-items: center; justify-content: center; }
.s-task { width: 51px; }
.s-pin { width: 47px; }
.s-ie { width: 56px; }
.s-swirl { width: 51px; padding-right: 9px; }
.s-edge { width: 46px; }
.slot.on::after { content: ""; position: absolute; left: 4px; right: 4px; bottom: 0; height: 2px; background: #6fb1f2; }
.slot.active { background: #28373d; }
.slot.active::after { left: 0; right: 0; }
.tv { width: 20px; height: 18px; fill: none; stroke: #fff; stroke-width: 1; }
.ti { width: 24px; height: 24px; fill: none; }
.w { fill: #e8e8e8; }
.ws { fill: none; stroke: #eee; stroke-width: 2.4; }
.ws2 { fill: none; stroke: #eee; stroke-width: 1; }
.gs { fill: none; stroke: #bbb; stroke-width: 1.4; }
.edge { fill: #0a7fd8; }
.ie-r { fill: #2f9be8; }
.ie-e { stroke: #fff; stroke-width: 2.4; }
.ie-o { stroke: #e9b92e; stroke-width: 1.6; }
.fo-b { fill: #d9ae4a; }
.fo-f { fill: #f2d58c; }
.fo-i { fill: #3d8fd4; }
.gr { fill: #6fc23a; stroke: #ddd; stroke-width: 1; }
.grw { stroke: #fff; stroke-width: 2; }
.grl { stroke: #4a9a20; stroke-width: 2; }
.nb { fill: #f3a41e; }
.nbp { fill: #fbe9c2; }
.nbl { stroke: #b3541a; stroke-width: 1; }
.gb { fill: #1c9ae8; }
.bk { fill: #0e55a8; }
.bkw { fill: #d7e6f5; }
.bkc { fill: #8fb9e0; stroke: #fff; }
.ba { fill: #0c8ff0; }
.baw { fill: none; stroke: #fff; stroke-width: 2; }
.pdf { width: 24px; height: 24px; border-radius: 2px; background: #b35a1e; border: 1px solid #888; display: flex; align-items: center; justify-content: center; }
.pdf span { color: #f0d5b5; font: bold 9px/10px "Liberation Sans", sans-serif; }
.tray { position: relative; z-index: 1; flex: none; width: 285px; display: flex; align-items: center; padding-left: 13px; color: #e6e6e6; }
.t-link { font-size: 12px; width: 24px; white-space: nowrap; }
.tr { fill: none; stroke: #eee; stroke-width: 1.2; flex: none; }
.trf { fill: #eee; stroke: none; }
.tr-up { width: 14px; height: 14px; margin-left: 11px; }
.tr-bat { width: 20px; height: 14px; margin-left: 7px; }
.tr-wifi { width: 18px; height: 15px; margin-left: 7px; }
.tr-vol { width: 17px; height: 15px; margin-left: 4px; }
.tr-kb { width: 23px; height: 15px; margin-left: 8px; }
.t-zh { margin-left: 10px; width: 12px; font-size: 12px; }
.sogou { margin-left: 12px; width: 16px; height: 16px; border-radius: 4px; background: #e8411f; display: flex; align-items: center; justify-content: center; transform: rotate(-8deg); }
.sogou span { color: #fff; font: bold 13px/16px "Liberation Sans", sans-serif; }
.clock { flex: none; width: 56px; margin-left: 16px; display: flex; flex-direction: column; align-items: center; font: 13px/17px "Noto Sans CJK SC", sans-serif; white-space: nowrap; color: #e8e8e8; }
.notify { flex: 1; background: #010203; display: flex; align-items: center; justify-content: center; padding-left: 4px; }
.nt { width: 16px; height: 16px; fill: none; stroke: #fff; stroke-width: 1.1; }
```
